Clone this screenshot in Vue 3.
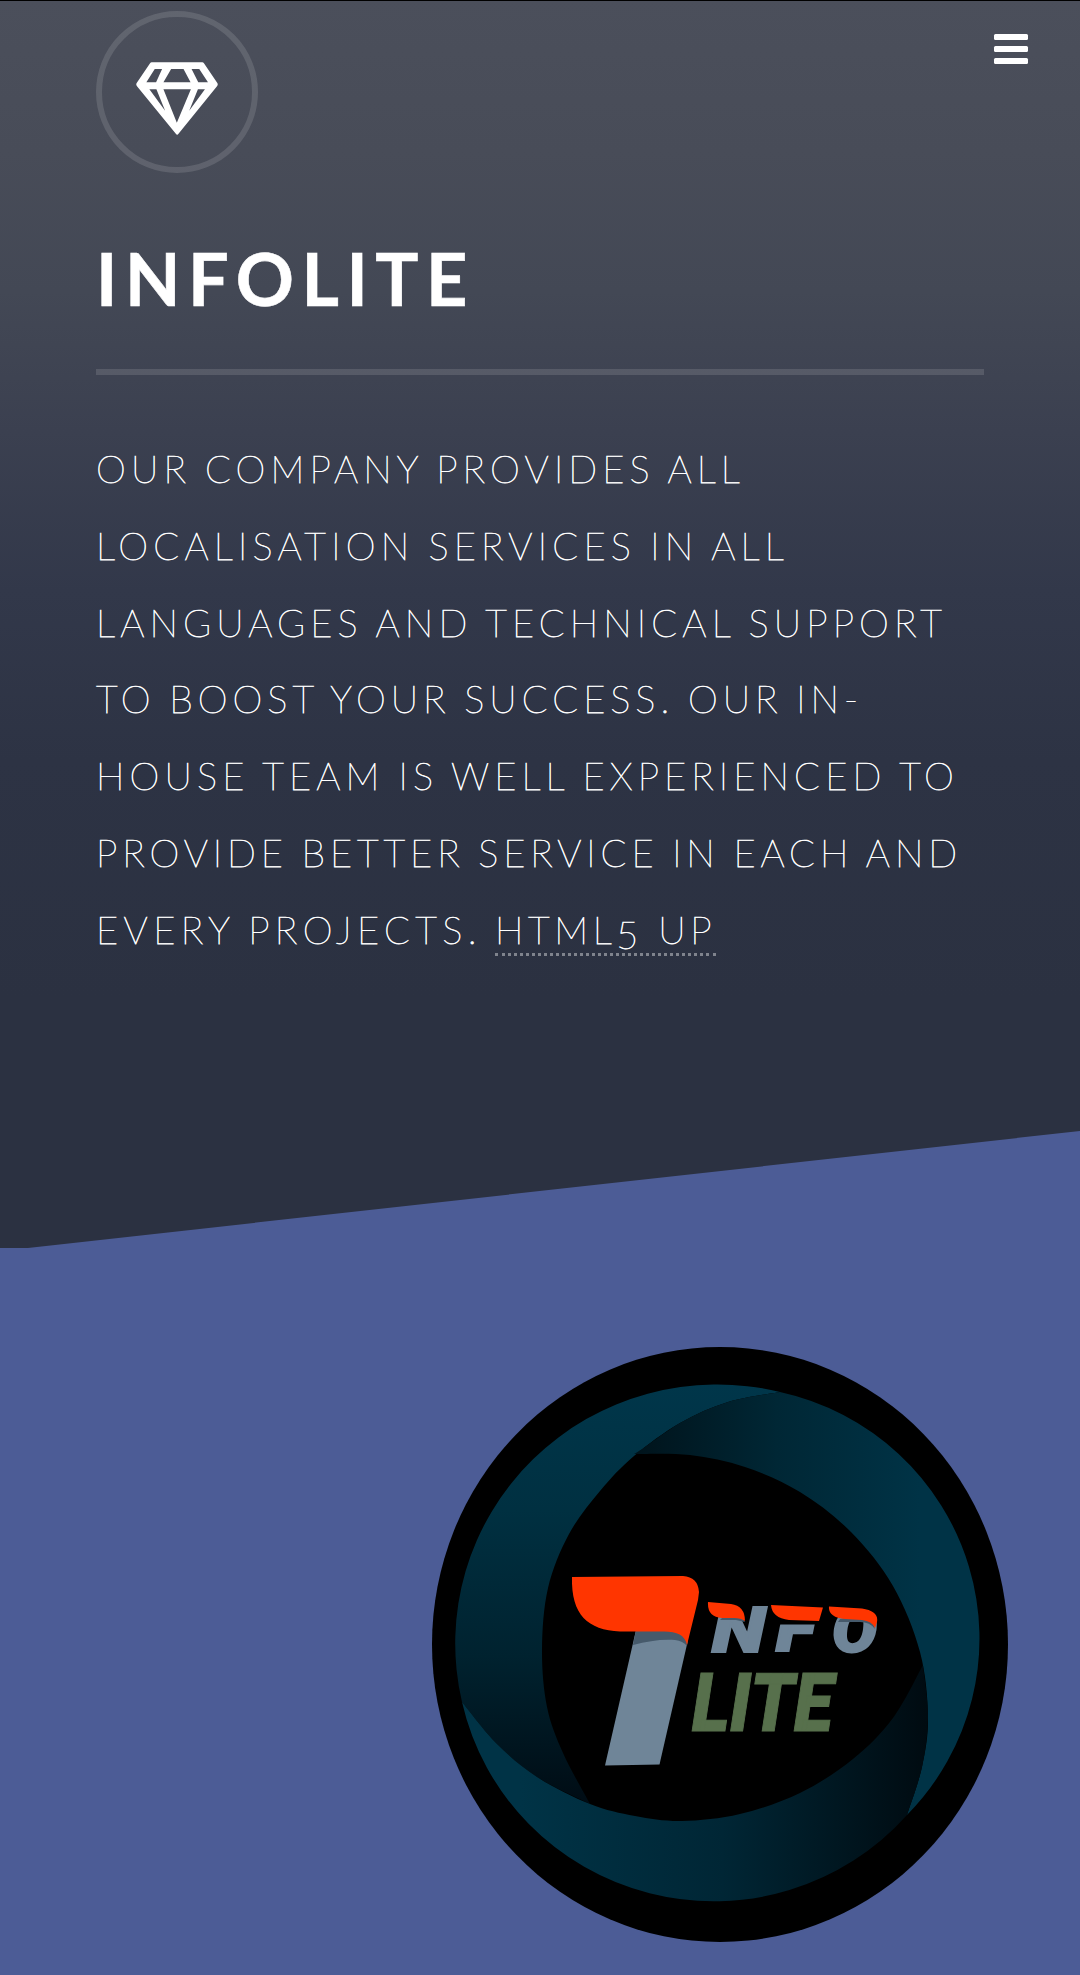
<script setup>
import { onMounted, ref } from 'vue'

// Intro copy, one entry per line, with the measure each line is set to.
const lines = [
  { text: 'Our company provides all', width: 649 },
  { text: 'localisation services in all', width: 693 },
  { text: 'languages and technical support', width: 851 },
  { text: 'to boost your success. Our in-', width: 767 },
  { text: 'house team is well experienced to', width: 863 },
  { text: 'provide better service in each and', width: 866 },
  { text: 'every projects.', width: 386 }
]
const root = ref(null)

// Track every line out to its measure by adjusting the letter spacing.
onMounted(() => {
  root.value.querySelectorAll('[data-measure]').forEach((el) => {
    el.style.letterSpacing = '0px'
    const natural = el.getBoundingClientRect().width
    const gap = (Number(el.dataset.measure) - natural) / el.textContent.trim().length
    el.style.letterSpacing = gap + 'px'
  })
})

// Smooth curve through a list of points (Catmull-Rom to Bezier).
function curve(p) {
  let d = ''
  for (let i = 0; i < p.length - 1; i++) {
    const a = p[i - 1] || p[i]
    const b = p[i]
    const c = p[i + 1]
    const e = p[i + 2] || c
    d += `C${b[0] + (c[0] - a[0]) / 6} ${b[1] + (c[1] - a[1]) / 6} ${c[0] - (e[0] - b[0]) / 6} ${c[1] - (e[1] - b[1]) / 6} ${c[0]} ${c[1]}`
  }
  return d
}

// The three overlapping blades of the ring.
const left = 'M780 1392A262 259 0 0 0 462 1702' +
  curve([[462, 1702], [497, 1744], [537, 1777], [590, 1804]]) +
  curve([[590, 1804], [563, 1753], [547, 1707], [542, 1650], [548, 1588], [569, 1534], [600, 1491], [634, 1456], [680, 1423], [728, 1402], [780, 1392]]) + 'Z'
const right = 'M780 1392A254.500 252.500 0 0 1 907 1815' +
  curve([[907, 1815], [922, 1767], [928, 1717], [920, 1652], [893, 1586], [851, 1532], [800, 1492], [745, 1467], [690, 1455], [634, 1454]]) +
  curve([[634, 1456], [680, 1423], [728, 1402], [780, 1392]]) + 'Z'
const bottom = 'M907 1815A258 255.500 0 0 1 462 1702' +
  curve([[462, 1702], [497, 1744], [537, 1777], [590, 1804], [635, 1816], [682, 1821], [740, 1814], [800, 1793], [853, 1759], [893, 1718], [923, 1665]]) +
  curve([[923, 1665], [928, 1717], [922, 1767], [907, 1815]]) + 'Z'
</script>

<template>
  <div ref="root" class="page">
    <section class="banner">
      <header class="top">
        <div class="badge">
          <svg viewBox="0 0 245 217" width="82" height="73" aria-hidden="true">
            <path fill="#fff" fill-rule="evenodd" d="M47 0H198Q201 0 203 3L243 62Q246 67 242 72L127 214Q123 219 119 214L3 72Q-1 67 2 62L42 3Q44 0 47 0ZM56 20L31 60H60L78 20ZM105 20L82 60H163L142 20ZM166 20L186 60H215L189 20ZM40 81L87 145L61 81ZM82 81L122 181L164 81ZM185 81L159 145L206 81Z" />
          </svg>
        </div>
        <button class="menu" aria-label="Menu"><i></i><i></i><i></i></button>
      </header>
      <h1><span data-measure="379">Infolite</span></h1>
      <div class="copy">
        <p v-for="(line, i) in lines" :key="i">
          <span :data-measure="line.width">{{ line.text }}</span>
          <a v-if="i === lines.length - 1" data-measure="221">HTML<b>5</b> UP</a>
        </p>
      </div>
    </section>

    <section class="spotlight">
      <div class="logo">
        <svg viewBox="433 1347 576 595" width="576" height="595">
          <defs>
            <linearGradient id="gl" gradientUnits="userSpaceOnUse" x1="0" y1="1384" x2="0" y2="1804">
              <stop offset="0" stop-color="#00364a" /><stop offset=".3" stop-color="#003041" /><stop offset=".65" stop-color="#00222f" /><stop offset="1" stop-color="#000c14" />
            </linearGradient>
            <linearGradient id="gr" gradientUnits="userSpaceOnUse" x1="634" y1="0" x2="920" y2="0">
              <stop offset="0" stop-color="#00131b" /><stop offset=".5" stop-color="#002735" /><stop offset="1" stop-color="#003346" />
            </linearGradient>
            <linearGradient id="gb" gradientUnits="userSpaceOnUse" x1="520" y1="0" x2="926" y2="0">
              <stop offset="0" stop-color="#003346" /><stop offset=".5" stop-color="#002635" /><stop offset="1" stop-color="#000b11" />
            </linearGradient>
          </defs>
          <path :d="left" fill="url(#gl)" />
          <path :d="right" fill="url(#gr)" />
          <path :d="bottom" fill="url(#gb)" />

          <path fill="#6f8598" d="M636 1630L605 1765.500L659.500 1764.500L688 1640L670 1628Z" />
          <path fill="#465a6b" d="M636 1630L633 1645C648 1641 662 1639 675 1640Q683 1641 687 1646L688 1638L672 1628Z" />
          <path fill="#ff3500" d="M572 1577L683 1576Q698 1577 699 1592L698 1600L687 1645C685 1635 677 1631.500 664 1631.500H620C588 1630 571 1615 572 1577Z" />

          <g class="slate">
            <text x="712" y="1652" textLength="53" lengthAdjust="spacingAndGlyphs">N</text>
            <text x="776" y="1651" textLength="39" lengthAdjust="spacingAndGlyphs">F</text>
            <text x="832" y="1652" textLength="45" lengthAdjust="spacingAndGlyphs">O</text>
          </g>
          <path fill="#000" d="M768 1602H828L820 1624.500H768Z" />
          <path fill="#000" d="M704 1598H748L745 1612L741 1616H704ZM826 1598H884V1616H826Z" />
          <path fill="#465a6b" d="M722 1618L720 1620H736L745 1622L740 1614ZM840 1619L838 1622H860Q870 1622 875 1629L870 1614Z" />
          <path fill="#ff3500" d="M708 1602L731 1604Q745 1606 745 1621Q741 1618 734 1618H722Q707 1617 708 1602ZM771 1605L823 1607.500L819 1621L789 1620Q772 1618 771 1605ZM829 1606.500L862 1608.500Q879 1611 877 1622L875 1628Q872 1621 862 1620L845 1619Q828 1617 829 1606.500Z" />
          <text class="lite" x="692" y="1731" textLength="141" lengthAdjust="spacingAndGlyphs">LITE</text>
        </svg>
      </div>
    </section>
  </div>
</template>

<style>
body {
  margin: 0;
  background: #4c5c96;
}
</style>

<style scoped>
.page {
  width: 1080px;
  height: 1975px;
  overflow: hidden;
  background: #4c5c96;
  color: #fff;
  font-family: Lato, sans-serif;
}
.banner {
  box-sizing: border-box;
  height: 1248px;
  padding: 10px 96px 0;
  border-top: 1px solid #000;
  background: linear-gradient(180deg, #4b4f5b 0, #484c58 150px, #434855 290px, #3b4050 430px, #32384a 590px, #2d3344 760px, #2b3141 1000px, #2b3141 100%);
  clip-path: polygon(0 0, 100% 0, 100% 1131px, 28px 100%, 0 100%);
}
.top {
  display: flex;
  justify-content: space-between;
  align-items: flex-start;
  margin-right: -44px;
}
.badge {
  box-sizing: border-box;
  width: 162px;
  height: 162px;
  padding: 45px 0 0 34px;
  border: 6px solid rgba(255, 255, 255, .125);
  border-radius: 50%;
}
.badge svg {
  display: block;
}
.menu {
  display: flex;
  flex-direction: column;
  gap: 6px;
  width: 34px;
  margin: 22.500px 0 0;
  padding: 0;
  border: 0;
  background: none;
}
.menu i {
  height: 6px;
  border-radius: 1.500px;
  background: #fff;
}
h1 {
  height: 137px;
  margin: 59px 0 0;
  border-bottom: 6px solid rgba(255, 255, 255, .125);
  font-size: 72px;
  font-weight: 700;
  line-height: 92px;
  text-transform: uppercase;
  white-space: nowrap;
  -webkit-text-stroke: .6px #fff;
}
.copy {
  padding-top: 55px;
  font-size: 38px;
  font-weight: 100;
  line-height: 76.800px;
  text-transform: uppercase;
  -webkit-text-stroke: .75px #fff;
}
.copy p {
  display: flex;
  align-items: center;
  height: 76.800px;
  margin: 0;
  white-space: nowrap;
}
.copy span {
  word-spacing: -2px;
}
.copy a {
  margin: 4px 0 0 13px;
  border-bottom: 3px dotted rgba(255, 255, 255, .4);
  line-height: 44px;
  padding-bottom: 2px;
}
.copy b {
  font-weight: inherit;
  display: inline-block;
  line-height: 30px;
  transform: translateY(5px);
}
.spotlight {
  display: flex;
  justify-content: flex-end;
  padding: 99px 72px 0 0;
}
.logo {
  width: 576px;
  height: 595px;
  overflow: hidden;
  border-radius: 50%;
  background: #000;
}
.logo svg {
  display: block;
  margin-left: 1px;
}
.slate {
  fill: #6f8598;
  stroke: #6f8598;
  stroke-width: 2px;
  font: italic 900 63px Roboto, sans-serif;
}
.lite {
  fill: #57704c;
  stroke: #57704c;
  stroke-width: 1px;
  font: italic 900 82px Roboto, sans-serif;
}
</style>
